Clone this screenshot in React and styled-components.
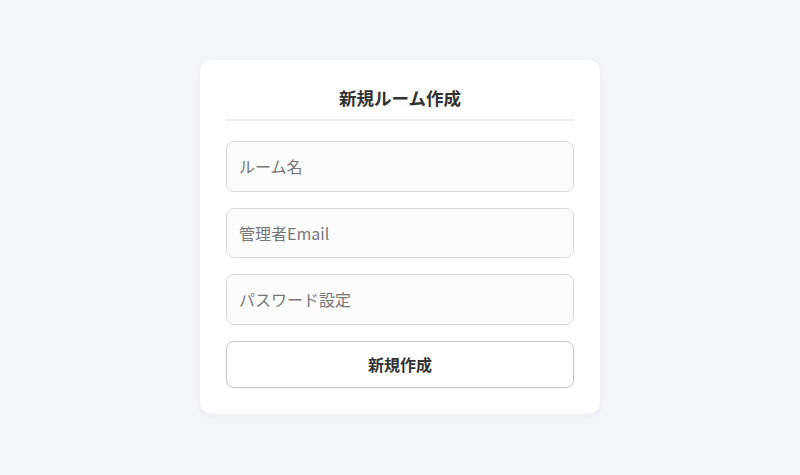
import styled, { createGlobalStyle } from 'styled-components';

const GlobalStyle = createGlobalStyle`
  html, body {
    margin: 0;
    padding: 0;
    background: #f2f5f9;
    font-family: "Noto Sans CJK JP", "Noto Sans", sans-serif;
  }
`;

const Page = styled.div`
  min-height: 475px;
  display: flex;
  justify-content: center;
  align-items: flex-start;
  padding-top: 60px;
  box-sizing: border-box;
`;

const Card = styled.form`
  width: 400px;
  box-sizing: border-box;
  background: #ffffff;
  border-radius: 12px;
  padding: 24px 26px 26px;
  box-shadow: 0 2px 8px rgba(0, 0, 0, 0.04);
  display: flex;
  flex-direction: column;
`;

const Title = styled.h2`
  margin: 0 0 20px;
  padding: 2px 0 9px;
  font-size: 17.5px;
  line-height: 24px;
  font-weight: 700;
  color: #333333;
  text-align: center;
  border-bottom: 2px solid #e9e9e9;
`;

const Fields = styled.div`
  display: flex;
  flex-direction: column;
  gap: 16px;
`;

const Input = styled.input`
  height: 50.5px;
  box-sizing: border-box;
  padding: 0 12px;
  border: 1px solid #d9d9d9;
  border-radius: 8px;
  background: #fbfbfb;
  font-family: inherit;
  font-size: 16px;
  color: #333;
  outline: none;

  &::placeholder {
    color: #777777;
  }
`;

const Button = styled.button`
  height: 47px;
  border: 1px solid #c9c9c9;
  border-radius: 8px;
  background: #ffffff;
  font-family: inherit;
  font-size: 16px;
  font-weight: 700;
  color: #333333;
  cursor: pointer;
  box-shadow: 0 1px 3px rgba(0, 0, 0, 0.06);
`;

export default function App() {
  return (
    <>
      <GlobalStyle />
      <Page>
        <Card onSubmit={(e) => e.preventDefault()}>
          <Title>新規ルーム作成</Title>
          <Fields>
            <Input placeholder="ルーム名" />
            <Input placeholder="管理者Email" />
            <Input type="password" placeholder="パスワード設定" />
            <Button type="submit">新規作成</Button>
          </Fields>
        </Card>
      </Page>
    </>
  );
}
